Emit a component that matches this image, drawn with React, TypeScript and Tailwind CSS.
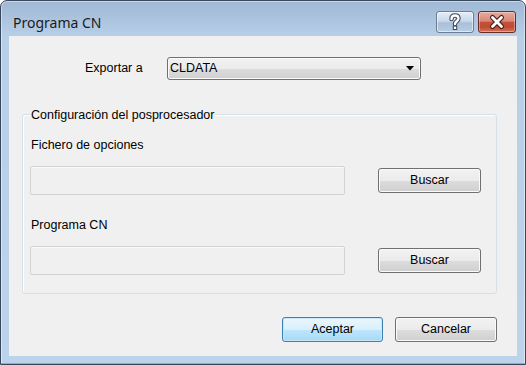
import React from 'react';

const font = { fontFamily: '"Liberation Sans", Arial, sans-serif' };

function WinButton({ label, primary = false, width }: { label: string; primary?: boolean; width: string }) {
  return (
    <button
      className={
        'h-[25px] rounded-[3px] border text-[12.5px] leading-none text-black ' +
        width +
        (primary
          ? ' border-[#3c7fb1] bg-[linear-gradient(to_bottom,#eaf6fd_0%,#d9f0fc_50%,#bee6fd_51%,#a7d9f5_100%)] shadow-[inset_0_0_0_1px_#c4e8fa]'
          : ' border-[#707070] bg-[linear-gradient(to_bottom,#f2f2f2_0%,#ebebeb_50%,#dddddd_51%,#cfcfcf_100%)] shadow-[inset_0_0_0_1px_#fbfbfb]')
      }
    >
      {label}
    </button>
  );
}

function Field() {
  return <div className="h-[29px] w-[315px] rounded-[2px] border border-[#d3d3d3] bg-[#f0f0f0] shadow-[inset_0_1px_0_#fafafa]" />;
}

export default function App() {
  return (
    <div style={font} className="w-[526px] h-[365px] overflow-hidden bg-white">
      <div className="flex h-full flex-col rounded-t-[7px] border border-[#37485c] bg-[linear-gradient(to_bottom,#9fb8d4_0px,#b8cfe8_36px,#bcd3eb_100%)] shadow-[inset_0_0_0_1px_rgba(255,255,255,0.45)]">
        {/* title bar */}
        <div className="flex h-[35px] shrink-0 items-start justify-between">
          <span
            className="ml-[12px] mt-[13px] text-[14px] leading-[18px] text-[#1b1b1b]"
            style={{ fontFamily: '"Noto Sans", "Open Sans", sans-serif' }}
          >
            Programa CN
          </span>
          <div className="mr-[9px] mt-[10px] flex gap-[4px]">
            <div className="h-[22px] w-[38px] rounded-[3px] border border-[#6b7d93] bg-[linear-gradient(to_bottom,#e3edf7_0%,#c9d9ea_45%,#a9c0d9_55%,#b9cde2_100%)] shadow-[inset_0_0_0_1px_rgba(255,255,255,0.55)]">
              <svg width="36" height="20" viewBox="0 0 36 20">
                <path d="M14.5 7 C14.5 4.3 16.3 3.5 18 3.5 C20 3.5 21.5 4.6 21.5 6.6 C21.5 9.2 18 9.4 18 12" fill="none" stroke="#3b4656" strokeWidth="4.4" strokeLinecap="round" />
                <rect x="15.8" y="13.6" width="4.4" height="4.4" rx="0.6" fill="#3b4656" />
                <path d="M14.5 7 C14.5 4.3 16.3 3.5 18 3.5 C20 3.5 21.5 4.6 21.5 6.6 C21.5 9.2 18 9.4 18 12" fill="none" stroke="#ffffff" strokeWidth="2.4" strokeLinecap="round" />
                <rect x="16.8" y="14.6" width="2.4" height="2.4" fill="#ffffff" />
              </svg>
            </div>
            <div className="h-[22px] w-[38px] rounded-[3px] border border-[#6a2a26] bg-[linear-gradient(to_bottom,#e9a99b_0%,#d88a79_45%,#c7503d_52%,#c14a34_75%,#d4765e_100%)] shadow-[inset_0_0_0_1px_rgba(255,255,255,0.35)]">
              <svg width="36" height="20" viewBox="0 0 36 20">
                <path d="M13.5 5.5 L22.5 14.5 M22.5 5.5 L13.5 14.5" stroke="#4a1d18" strokeWidth="5" strokeLinecap="round" />
                <path d="M13.5 5.5 L22.5 14.5 M22.5 5.5 L13.5 14.5" stroke="#ffffff" strokeWidth="2.8" strokeLinecap="round" />
              </svg>
            </div>
          </div>
        </div>

        {/* client area */}
        <div className="mx-[8px] flex h-[320px] shrink-0 flex-col bg-[#f0f0f0]">
          <div className="flex items-center pl-[76px] pt-[21px]">
            <span className="w-[82px] text-[12.5px] text-black">Exportar a</span>
            <div className="flex h-[23px] w-[254px] items-center justify-between rounded-[3px] border border-[#707070] bg-[linear-gradient(to_bottom,#f2f2f2_0%,#ebebeb_50%,#dddddd_51%,#cfcfcf_100%)] pl-[2px] pr-[6px] shadow-[inset_0_0_0_1px_#fbfbfb]">
              <span className="text-[12.5px] text-black">CLDATA</span>
              <svg width="8" height="5" viewBox="0 0 8 5">
                <path d="M0 0 H8 L4 4.5 Z" fill="#000" />
              </svg>
            </div>
          </div>

          <div className="relative ml-[13px] mt-[34px] h-[180px] w-[475px] rounded-[3px] border border-[#d5dfe5] px-[7px] shadow-[inset_1px_1px_0_#ffffff]">
            <span className="absolute -top-[7px] left-[7px] bg-[#f0f0f0] px-[1px] text-[12.5px] leading-[15px] text-black">
              Configuración del posprocesador
            </span>
            <div className="pl-[1px] pt-[23px] text-[12.5px] leading-[15px] text-black">Fichero de opciones</div>
            <div className="mt-[13px] flex items-start">
              <Field />
              <div className="ml-[33px] mt-[1px]">
                <WinButton label="Buscar" width="w-[103px]" />
              </div>
            </div>
            <div className="mt-[23px] pl-[1px] text-[12.5px] leading-[15px] text-black">Programa CN</div>
            <div className="mt-[13px] flex items-start">
              <Field />
              <div className="ml-[33px] mt-[1px]">
                <WinButton label="Buscar" width="w-[103px]" />
              </div>
            </div>
          </div>

          <div className="mt-[23px] flex justify-end gap-[12px] pr-[20px]">
            <WinButton label="Aceptar" primary width="w-[101px]" />
            <WinButton label="Cancelar" width="w-[102px]" />
          </div>
        </div>

        <div className="flex-1" />
        <div className="h-[1px] shrink-0 bg-[#62c0dd]" />
      </div>
    </div>
  );
}
